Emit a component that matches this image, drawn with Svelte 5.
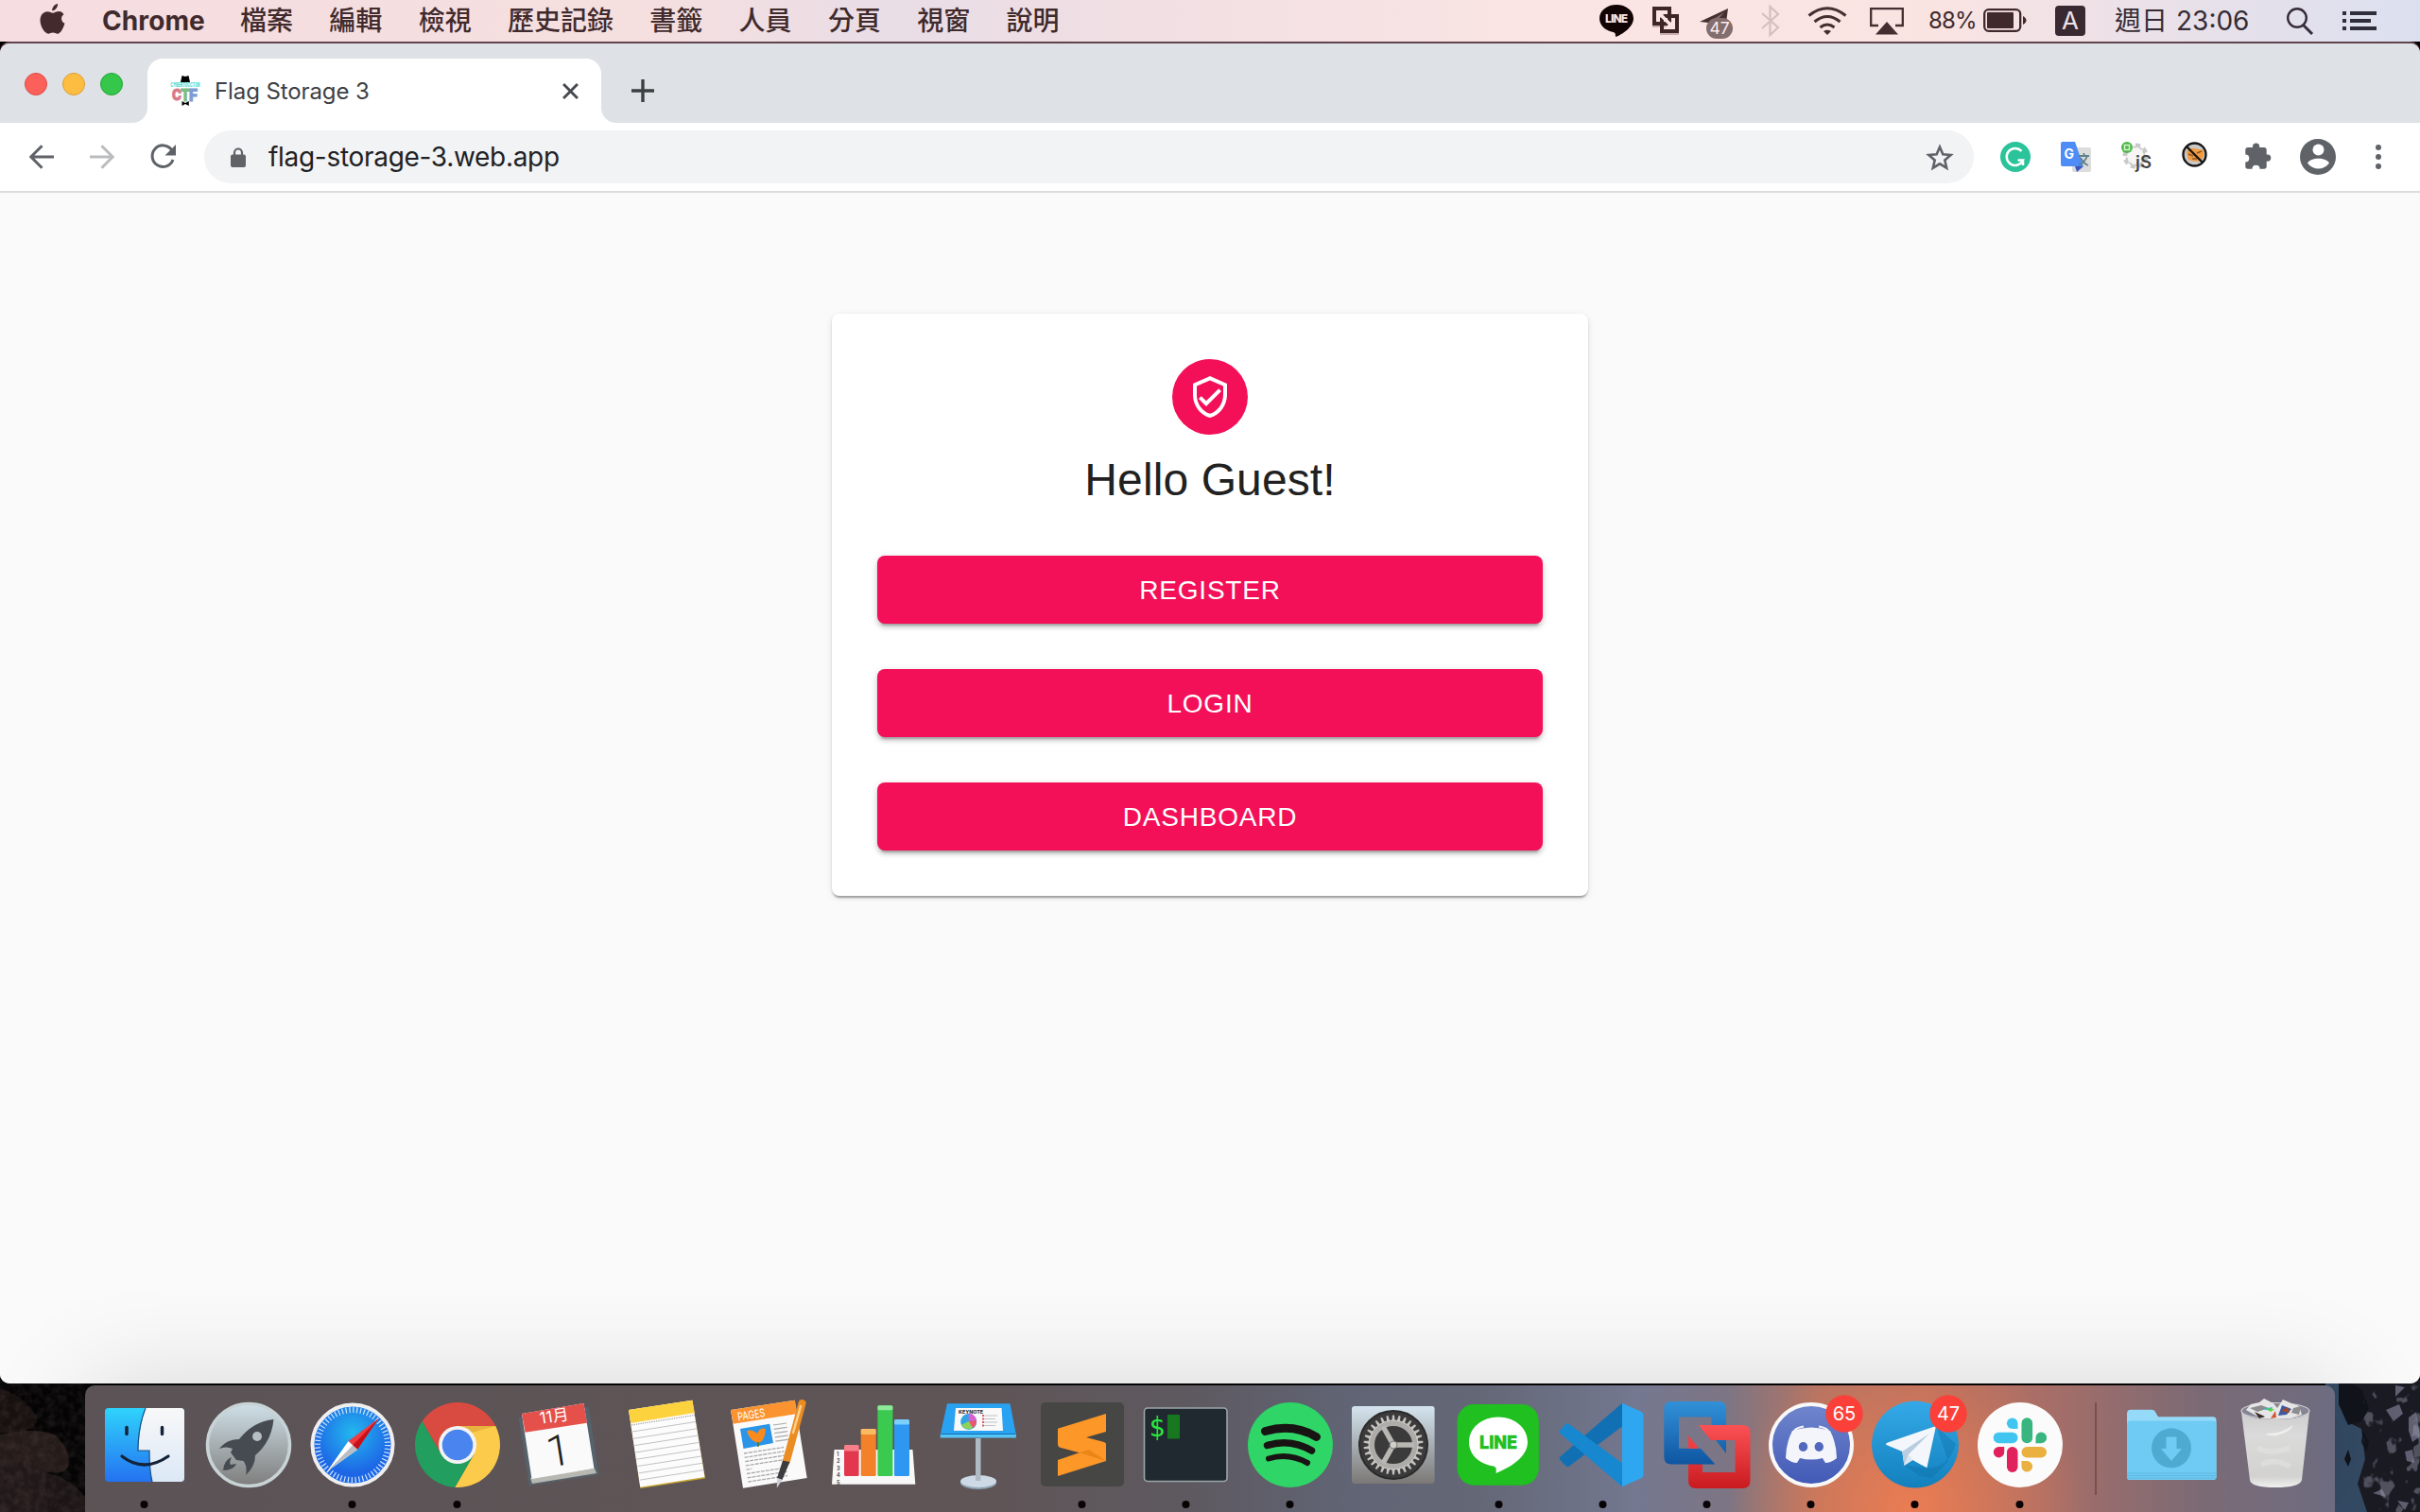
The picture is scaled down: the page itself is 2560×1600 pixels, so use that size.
<script>
  const menus = ['檔案', '編輯', '檢視', '歷史記錄', '書籤', '人員', '分頁', '視窗', '說明'];
  const actions = ['Register', 'Login', 'Dashboard'];
  const apps = [
    { name: 'finder', running: true },
    { name: 'launchpad' },
    { name: 'safari', running: true },
    { name: 'chrome', running: true },
    { name: 'calendar' },
    { name: 'notes' },
    { name: 'pages' },
    { name: 'numbers' },
    { name: 'keynote' },
    { name: 'sublime', running: true },
    { name: 'terminal', running: true },
    { name: 'spotify', running: true },
    { name: 'preferences' },
    { name: 'line', running: true },
    { name: 'vscode', running: true },
    { name: 'vmware', running: true },
    { name: 'discord', running: true, badge: '65' },
    { name: 'telegram', running: true, badge: '47' },
    { name: 'slack', running: true }
  ];
  const noteLines = [0, 1, 2, 3, 4, 5, 6, 7];
  const teeth = Array.from({ length: 30 }, (_, i) => i * 12);
</script>

<div class="desktop">
  <svg class="wallpaper" viewBox="0 0 2560 140" aria-hidden="true">
    <defs>
      <filter id="grain" x="0" y="0" width="100%" height="100%">
        <feTurbulence type="fractalNoise" baseFrequency="0.12" numOctaves="3" seed="4" />
        <feColorMatrix values="0 0 0 0 0.28  0 0 0 0 0.2  0 0 0 0 0.19  0 1.2 0 0 -0.42" />
      </filter>
      <filter id="snow" x="0" y="0" width="100%" height="100%">
        <feTurbulence type="fractalNoise" baseFrequency="0.06 0.05" numOctaves="3" seed="9" />
        <feColorMatrix values="0 0 0 0 0.38  0 0 0 0 0.39  0 0 0 0 0.48  12 0 0 0 -7" />
      </filter>
    </defs>
    <rect width="2560" height="140" fill="#060506" />
    <path d="M0 10Q22 14 40 40Q38 58 0 56Z" fill="#17110f" />
    <path d="M0 58Q35 50 58 58Q76 76 72 92Q64 104 40 94L0 88Z" fill="#261c1a" />
    <path d="M0 88Q30 84 50 98Q58 120 54 140H0Z" fill="#221a1a" />
    <path d="M48 98Q74 104 90 124V140H50Z" fill="#1d1616" />
    <rect width="90" height="140" filter="url(#grain)" opacity=".25" />
    <rect x="2460" width="100" height="140" fill="#1b1b24" />
    <path d="M2460 0H2476L2474 24 2482 44 2498 52 2502 84 2494 110 2504 140H2460Z" fill="#354b65" />
    <path d="M2474 4L2484 2 2498 10 2506 30 2498 44 2484 48 2474 26ZM2484 74L2487 84 2484 92 2480 84ZM2500 54L2506 66 2503 76 2498 66Z" fill="#11141b" />
    <path d="M2534 6L2544 8 2534 18ZM2524 32L2538 26 2542 36 2532 44ZM2548 40L2556 34 2560 60 2552 66 2548 54ZM2544 76L2552 74 2554 88 2546 86ZM2510 120L2520 116 2524 124ZM2536 128L2548 130 2544 138Z" fill="#5f6072" />
    <rect x="2500" width="60" height="140" filter="url(#snow)" opacity=".4" />
  </svg>

  <header class="menubar">
    <svg class="apple" viewBox="0 0 26 32"><path d="M18.6 0C18.8 3.600 15.800 7.300 12.700 7.300 12.300 4 15.400.4 18.600 0ZM25 11.300C21.500 13.400 21.700 19 26 20.800 24.500 25.500 21.800 31.700 18.400 31.700 16.600 31.700 15.700 30.600 13.500 30.600S10.300 31.700 8.600 31.700C5 31.700 0 24.400 0 17.600 0 11.700 3.600 8.200 7.700 8.200 10 8.200 12 9.700 13.500 9.700 14.800 9.700 17.200 8 20 8 22 8 23.900 9.200 25 11.300Z" fill="#432b2d" /></svg>
    <strong>Chrome</strong>
    <nav>
      {#each menus as menu}<span>{menu}</span>{/each}
    </nav>
    <div class="status">
      <svg class="s-line" viewBox="0 0 36 34"><path d="M18 0C8 0 0 6.300 0 14.500 0 21.500 6 27.300 13.500 28.700 16.500 29.300 17 30 17 34 20 33.500 36 25 36 14.500 36 6.300 28 0 18 0Z" fill="#120405" /><text x="18" y="19.200" text-anchor="middle" font-size="12" font-weight="800" fill="#fbe5e4" textLength="24">LINE</text></svg>
      <svg class="s-vm" viewBox="0 0 28 30"><path d="M0 18H20V22H0ZM8 26H28V30H8Z" fill="#c9b0ae" /><rect x="2" y="2" width="16" height="16" fill="none" stroke="#3f2523" stroke-width="4" /><rect x="10" y="10" width="16" height="16" fill="none" stroke="#3f2523" stroke-width="4" /><path d="M8 8L21 21" stroke="#fbe5e4" stroke-width="3.500" /><path d="M6 6H14L6 14ZM22 22H14L22 14Z" fill="#fbe5e4" /></svg>
      <div class="s-tg">
        <svg viewBox="0 0 32 26"><path d="M0 14L30 0 27 22 14 20 9 15Z" fill="#452f2f" /><path d="M10 14L26 4 14 18" fill="#806a6a" /></svg>
        <span>47</span>
      </div>
      <svg class="s-bt" viewBox="0 0 20 32"><path d="M1 8L18 23 9.500 31V1L18 9 1 24" fill="none" stroke="#d6bfbf" stroke-width="2.200" /></svg>
      <svg class="s-wifi" viewBox="0 0 42 30"><g fill="none" stroke="#452e30" stroke-width="3"><path d="M1.500 9.500Q21-6 40.500 9.500" /><path d="M7.500 16Q21 5 34.500 16" /><path d="M13.500 22Q21 16 28.500 22" /></g><path d="M17 26Q21 23.500 25 26L21 30Z" fill="#452e30" /></svg>
      <svg class="s-air" viewBox="0 0 36 29"><path d="M9 19H1.200V1.200H34.800V19H27" fill="none" stroke="#452e30" stroke-width="2.300" /><path d="M18 15L30 28.500H6Z" fill="#452e30" /></svg>
      <span class="percent">88%</span>
      <svg class="s-batt" viewBox="0 0 46 26"><rect x="1.200" y="1.200" width="38" height="22.600" rx="4.500" fill="none" stroke="#40292d" stroke-width="2.300" /><rect x="4" y="4" width="28" height="17" rx="1" fill="#40292d" /><path d="M42 8Q45.500 10 45.500 12.500T42 17Z" fill="#40292d" /></svg>
      <span class="ime">A</span>
      <span class="clock"><span>週日</span><span class="time">23:06</span></span>
      <svg class="s-find" viewBox="0 0 30 29"><circle cx="12" cy="11" r="9.800" fill="none" stroke="#352c38" stroke-width="2.400" /><path d="M18.500 18.500L28 28" stroke="#352c38" stroke-width="3" /></svg>
      <svg class="s-list" viewBox="0 0 36 20"><path d="M0 2H4M8 2H36M0 10H4M8 10H30M0 18H4M8 18H36" stroke="#2f2d3a" stroke-width="4" /></svg>
    </div>
  </header>

  <main class="window">
    <div class="tabstrip">
      <div class="lights"><i class="red"></i><i class="yellow"></i><i class="green"></i></div>
      <div class="tab">
        <svg class="favicon" viewBox="0 0 32 32"><path d="M11 7L12.500 0 16 1 19.500 0 21 7Z" fill="#000" /><text x="0.500" y="12.300" font-size="5.500" font-weight="800" fill="#3ad8cf" textLength="31" lengthAdjust="spacingAndGlyphs">CYBERTOCCTOR</text><text x="2" y="26" font-size="16" font-weight="800" fill="#d9788a" stroke="#d9788a" textLength="10" lengthAdjust="spacingAndGlyphs">C</text><text x="11" y="27" font-size="17" font-weight="800" fill="#7bbd83" stroke="#7bbd83" textLength="10" lengthAdjust="spacingAndGlyphs">T</text><text x="20" y="26.500" font-size="17" font-weight="800" fill="#7d9bd3" stroke="#7d9bd3" textLength="9" lengthAdjust="spacingAndGlyphs">F</text><path d="M12.500 27L16 29 19.800 27V32L16 30 12.500 32Z" fill="#000" /></svg>
        <span>Flag Storage 3</span>
        <svg class="close" viewBox="0 0 16 16"><path d="M1 1L15 15M15 1L1 15" stroke="#45494d" stroke-width="2.700" /></svg>
      </div>
      <svg class="plus" viewBox="0 0 24 24"><path d="M12 0V24M0 12H24" stroke="#3c4043" stroke-width="3.400" /></svg>
    </div>

    <div class="toolbar">
      <svg class="back" viewBox="0 0 26 26"><path d="M26 13H2.500M13.500 1.200L1.800 13 13.500 24.800" fill="none" stroke="#5f6368" stroke-width="3" /></svg>
      <svg class="forward" viewBox="0 0 26 26"><path d="M0 13H23.500M12.500 1.200L24.200 13 12.500 24.800" fill="none" stroke="#babcbe" stroke-width="3" /></svg>
      <svg class="reload" viewBox="0 0 28 26"><path d="M22.500 5.500A11.300 11.300 0 1 0 24 16" fill="none" stroke="#5f6368" stroke-width="3" /><path d="M27 0V11.500H15.500Z" fill="#5f6368" /></svg>
      <div class="omnibox">
        <svg class="lock" viewBox="0 0 16 21"><path d="M4 8V5.500A4 4 0 0 1 12 5.500V8" fill="none" stroke="#5f6368" stroke-width="2.200" /><rect y="7.500" width="16" height="13.500" rx="2" fill="#5f6368" /></svg>
        <span>flag-storage-3.web.app</span>
        <svg class="star" viewBox="0 0 30 29"><path d="M15 3.500L18.300 11.300 26.600 12 20.300 17.500 22.200 25.700 15 21.300 7.800 25.700 9.700 17.500 3.400 12 11.700 11.300Z" fill="none" stroke="#5f6368" stroke-width="2.600" /></svg>
      </div>
      <div class="extensions">
        <svg viewBox="0 0 32 32"><circle cx="16" cy="16" r="16" fill="#2bc39a" /><path d="M22.500 10A9 9 0 1 0 24 19.500H18.500M24 25V18.500" fill="none" stroke="#fff" stroke-width="2.500" /></svg>
        <svg viewBox="0 0 32 32"><rect x="12" y="6" width="20" height="26" rx="2" fill="#dcdcdc" /><path d="M0 2Q0 0 2 0H15L24 26H2Q0 26 0 24Z" fill="#4d8df5" /><path d="M15 26H24L17 32Z" fill="#3a55c0" /><text x="3.500" y="18" font-size="14" font-weight="700" fill="#fff">G</text><path d="M19 15H30M24.500 12V15M28 15Q26 21 19 25M21 17Q24 23 29 25" fill="none" stroke="#60808a" stroke-width="1.800" /></svg>
        <svg viewBox="0 0 32 32"><circle cx="15" cy="15" r="11.500" fill="#f4f4f4" stroke="#c9c9c9" stroke-width="4" stroke-dasharray="5 4" /><circle cx="15" cy="15" r="9.500" fill="#f6f6f6" stroke="#c4c4c4" stroke-width="1.500" stroke-dasharray="4 2" /><circle cx="6" cy="6" r="6" fill="#4eb848" /><rect x="3.500" y="3.500" width="5" height="5" fill="none" stroke="#d2f5cf" stroke-width="1.500" /><text x="15" y="28" font-size="18" font-weight="600" fill="#454545" textLength="17" lengthAdjust="spacingAndGlyphs">jS</text></svg>
        <svg viewBox="0 0 32 32"><circle cx="13.500" cy="13.500" r="12" fill="#c9c9c9" stroke="#151515" stroke-width="2.400" /><path d="M5 11Q7 6 13 7T23 9Q24 17 20 20 13 22 7 19Z" fill="#f39a3e" /><path d="M7 13L12 15M16 12L21 10M11 18H16" stroke="#8c5a2c" stroke-width="1.500" /><path d="M5 5L22 22" stroke="#151515" stroke-width="2.400" /></svg>
        <svg viewBox="0 0 32 32"><g transform="translate(1 .5)"><path d="M5 5.500H10V4.500A3.600 3.600 0 0 1 17.200 4.500V5.500H22Q24.700 5.500 24.700 8.200V13H25.700A3.600 3.600 0 0 1 25.700 20.200H24.700V25.500Q24.700 28.200 22 28.200H17.500A4 4 0 0 0 9.500 28.200H5Q2.300 28.200 2.300 25.500V21A4 4 0 0 0 2.300 13V8.200Q2.300 5.500 5 5.500Z" fill="#5f6368" /></g></svg>
      </div>
      <svg class="avatar" viewBox="0 0 38 38"><circle cx="19" cy="19" r="19" fill="#5f6368" /><circle cx="19.500" cy="11.500" r="6" fill="#fff" /><path d="M8 25.500C11 19 28 19 31 25.500 25 33.500 14 33.500 8 25.500Z" fill="#fff" /></svg>
      <svg class="dots" viewBox="0 0 6 28"><circle cx="3" cy="4" r="3" fill="#5f6368" /><circle cx="3" cy="14" r="3" fill="#5f6368" /><circle cx="3" cy="24" r="3" fill="#5f6368" /></svg>
    </div>

    <section class="page">
      <div class="card">
        <div class="shield">
          <svg viewBox="0 0 24 24"><path d="M12 1L3 5v6c0 5.550 3.840 10.740 9 12 5.160-1.260 9-6.450 9-12V5l-9-4zm7 10c0 4.520-2.980 8.690-7 9.930-4.020-1.240-7-5.410-7-9.930V6.300l7-3.110 7 3.110V11zm-11.590.59L6 13l4 4 8-8-1.410-1.420L10 14.170z" fill="#fff" /></svg>
        </div>
        <h1>Hello Guest!</h1>
        {#each actions as action}<button>{action}</button>{/each}
      </div>
    </section>
  </main>

  <footer class="dock">
    {#each apps as app}
      <div class="slot">
        <svg viewBox="0 0 110 134">
          {#if app.name === 'finder'}
            <defs>
              <linearGradient id="finderBlue" x2="0" y2="1"><stop stop-color="#2fd3fc" /><stop offset="1" stop-color="#2472f0" /></linearGradient>
              <linearGradient id="finderWhite" x2="0" y2="1"><stop stop-color="#f8f8f8" /><stop offset="1" stop-color="#dce8f6" /></linearGradient>
            </defs>
            <rect x="13" y="24" width="84" height="78" rx="4" fill="url(#finderBlue)" />
            <path d="M56 24H93Q97 24 97 28V98Q97 102 93 102H63Q60 90 60 69H48Q49 44 56 24Z" fill="url(#finderWhite)" />
            <path d="M56 24Q48 44 48 69H60Q60 90 63 102" fill="none" stroke="#174f80" stroke-width="1.200" />
            <path d="M36 44.500V51.500M73.500 44.500V51.500" stroke="#142339" stroke-width="3.500" stroke-linecap="round" />
            <path d="M31 75Q54 93 80 75" fill="none" stroke="#142339" stroke-width="3.200" stroke-linecap="round" />
          {:else if app.name === 'launchpad'}
            <defs><linearGradient id="silver" x2="0" y2="1"><stop stop-color="#cfe0e8" /><stop offset="1" stop-color="#7e7d7c" /></linearGradient></defs>
            <circle cx="55" cy="63" r="43.500" fill="url(#silver)" stroke="#c8d3d6" stroke-width="3.500" />
            <path d="M81.500 36Q60 38 45 57 32 57 24 67 31 64 38 67L36 71 42 79 49.500 80Q54 86 52 95 62 86 62 74 79 60 81.500 36Z" fill="#454b50" />
            <path d="M42 83Q39 90 28 90 29 79 37 76 34 82 36 84Z" fill="#454b50" />
            <circle cx="64" cy="54" r="5" fill="#b6bfc3" />
          {:else if app.name === 'safari'}
            <defs><radialGradient id="compass" cy=".35"><stop stop-color="#23b8ee" /><stop offset="1" stop-color="#1d66e6" /></radialGradient></defs>
            <circle cx="55" cy="63" r="42.500" fill="url(#compass)" stroke="#efefef" stroke-width="4" />
            <circle cx="55" cy="63" r="37" fill="none" stroke="#cfe8ff" stroke-width="6" stroke-dasharray="1.200 2.674" />
            <path d="M82.500 35L50.500 59 60 68Z" fill="#f03a40" /><path d="M82.500 35L55 63.500 60 68Z" fill="#c81018" />
            <path d="M28 91L50.500 59 60 68Z" fill="#fff" /><path d="M28 91L55 63.500 60 68Z" fill="#b9bec2" />
          {:else if app.name === 'chrome'}
            <path d="M17.500 38.100A45 45 0 0 1 95.300 43H55L37.700 73Z" fill="#d94b40" />
            <path d="M95.300 43A45 45 0 0 1 52.200 107.900L72.300 73 55 43Z" fill="#fdcb4b" />
            <path d="M52.200 107.900A45 45 0 0 1 17.500 38.100L37.700 73 72.300 73Z" fill="#229e5f" />
            <path d="M55 43H95.300L70 50Z" fill="#d9a235" opacity=".6" />
            <circle cx="55" cy="63" r="20" fill="#f3f3f3" /><circle cx="55" cy="63" r="16.300" fill="#4a84ef" />
          {:else if app.name === 'calendar'}
            <path d="M9.500 34L84 23 94.500 94.700 21 106Z" fill="#56626b" /><path d="M24 104L92 93 90 88 22 98Z" fill="#b8b8b2" />
            <path d="M13 30L78.500 19 89.500 88 23.500 99Z" fill="#fafafa" />
            <path d="M13 30L78.500 19 82 39.700 16.600 49.700Z" fill="#e5504b" />
            <text x="47" y="38.500" text-anchor="middle" font-size="17" fill="#fff" transform="rotate(-9 47 32)">11月</text>
            <text x="51.500" y="85" text-anchor="middle" font-size="46" font-weight="300" fill="#222" transform="rotate(-9 52 68)" class="thin">1</text>
          {:else if app.name === 'notes'}
            <path d="M16 26L83.300 15.700 97 98.500 28.600 109Z" fill="#c7a52e" /><path d="M16 26L83.300 15.700 96.500 97 28.200 107.700Z" fill="#fcfcfc" />
            <path d="M16 26L83.300 15.700 85.800 29 18.500 40Z" fill="#fcd23e" />
            <path d="M19 42L86 31.500" stroke="#9c9c9c" stroke-width="1.200" stroke-dasharray="1.200 1.200" />
            {#each noteLines as n}<path d="M20 49L87 38.500" stroke="#c2c2c2" stroke-width="1" transform="translate({n * 1.15} {n * 7.3})" />{/each}
          {:else if app.name === 'pages'}
            <path d="M14 26L81.700 15.700 94.700 98 27 108.700Z" fill="#fafafa" />
            <path d="M14 26L81.700 15.700 84.600 30 16.500 40.700Z" fill="#fb9430" />
            <text x="22" y="37.500" font-size="12" fill="#fff" transform="rotate(-9 22 37)" textLength="29" lengthAdjust="spacingAndGlyphs">PAGES</text>
            <path d="M24 46L55.200 40.700 59 61 27.500 67Z" fill="#2994e8" />
            <path d="M31 48Q37 46 42 51 45 44 51 46 50 60 43 61 34 59 31 48Z" fill="#fa8a1c" /><path d="M43 60V65" stroke="#49762c" stroke-width="1.500" />
            {#each noteLines as n}<path d="M28 72L{n === 4 ? 34 : 70} {n === 4 ? 71 : 65.500}" stroke="#aaa" stroke-width="1.300" stroke-dasharray="4 1" transform="translate({n * 0.6} {n * 4.3})" />{/each}
            {#each noteLines.slice(0, 5) as n}<path d="M59 42L73 40" stroke="#aaa" stroke-width="1.200" transform="translate({n * 0.6} {n * 4.3})" />{/each}
            <path d="M89.500 19L73 80" stroke="#ec8d22" stroke-width="8" stroke-linecap="round" /><path d="M88 22L80 50" stroke="#ffd090" stroke-width="2.500" stroke-linecap="round" />
            <path d="M76.500 81L69 79.500 63 98 68.500 100Z" fill="#3d3d3f" /><path d="M63 98L68.500 100 62.800 108.500Z" fill="#c9cfd4" />
          {:else if app.name === 'numbers'}
            <path d="M13.500 68H96.500L99.300 104.700H11Z" fill="#f8f8f8" />
            {#each [1, 2, 3, 4, 5] as n}<text x="16" y={67.5 + n * 7.4} font-size="5.500" font-weight="700" fill="#555">{n}</text>{/each}
            <rect x="24" y="63" width="15.600" height="33" rx="1.500" fill="#e2384d" /><rect x="24" y="63" width="15.600" height="6.500" rx="1.500" fill="#f5808a" />
            <rect x="41.700" y="46" width="16" height="50" rx="1.500" fill="#f2812a" /><rect x="41.700" y="46" width="16" height="6" rx="1.500" fill="#f9bb62" />
            <rect x="59.400" y="21.300" width="16" height="74.700" rx="1.500" fill="#3bca50" /><rect x="59.400" y="21.300" width="16" height="5" rx="1.500" fill="#8ee898" />
            <rect x="77" y="36" width="16" height="60" rx="1.500" fill="#2e97f2" /><rect x="77" y="36" width="16" height="5.500" rx="1.500" fill="#7dcffb" />
          {:else if app.name === 'keynote'}
            <ellipse cx="55" cy="103" rx="19" ry="7" fill="#8fa3b2" /><ellipse cx="55" cy="101.500" rx="19" ry="6.500" fill="#cddae6" />
            <rect x="52" y="56" width="5.500" height="45" fill="#aebac4" />
            <path d="M22 19.300H88.500L94.800 52V55H14.800V52Z" fill="#2aa2f2" /><path d="M14.800 52H94.800V55.500H14.800Z" fill="#56c4f4" /><path d="M15.500 51.500H94" stroke="#0f6fb6" stroke-width="1" />
            <path d="M31 24H79.600L81 48H29Z" fill="#f9f9f9" />
            <text x="34" y="29.500" font-size="5" font-weight="800" fill="#333" textLength="26" lengthAdjust="spacingAndGlyphs">KEYNOTE</text>
            <circle cx="44.700" cy="38.500" r="8.500" fill="#2fa5e6" /><path d="M44.700 38V29.500A8.500 8.500 0 0 1 53 37Z" fill="#d85fd2" /><path d="M44.700 38L53 37A8.500 8.500 0 0 1 49 45Z" fill="#f0546a" /><path d="M44.700 38L49 45A8.500 8.500 0 0 1 37 42Z" fill="#8ed357" />
            <path d="M60 32H75M60 35.500H73M60 39H75M60 42.500H73" stroke="#c2c2c2" /><path d="M59 32H61M59 35.500H61M59 39H61M59 42.500H61" stroke="#e6576c" stroke-width="2" />
          {:else if app.name === 'sublime'}
            <rect x="11" y="18" width="88" height="89" rx="5" fill="#464645" />
            <path d="M80 62V80L51.700 71.300 30.500 65.500Q29 64.500 29 62V45.700L80 30V49L59 55 78 60Q80 61 80 62Z" fill="#fd9727" /><path d="M80 62V80L29 96V79L51.700 71.300Z" fill="#fd9727" /><path d="M51.700 71.300L62 68 80 80Z" fill="#ea8618" />
          {:else if app.name === 'terminal'}
            <rect x="10.500" y="24" width="87.500" height="77.500" rx="3.500" fill="#20292f" stroke="#9aa6ab" stroke-width="1.600" />
            <text x="15.500" y="54" font-size="28" fill="#29e83c" class="mono">$</text><rect x="35" y="31" width="13" height="25.500" fill="#17781f" />
          {:else if app.name === 'spotify'}
            <circle cx="55" cy="63" r="45" fill="#2fd566" />
            <g fill="none" stroke="#191414" stroke-linecap="round"><path d="M28.500 48.500Q58 40 82.500 54.500" stroke-width="9" /><path d="M30.500 63.500Q55 56 77.500 69" stroke-width="7.500" /><path d="M32 77.500Q53 71 73 82" stroke-width="6" /></g>
          {:else if app.name === 'preferences'}
            <defs><linearGradient id="steel" x2="0" y2="1"><stop stop-color="#d4e4ee" /><stop offset="1" stop-color="#7b7876" /></linearGradient></defs>
            <rect x="10" y="22" width="87.600" height="82" rx="3" fill="url(#steel)" />
            <circle cx="54" cy="63" r="36" fill="#3c3b3b" stroke="#2b2b2b" stroke-width="2" />
            {#each teeth as a}<path d="M52.300 38L53 31.500H55L55.700 38Z" fill="#c3c2be" transform="rotate({a} 54 63)" />{/each}
            <circle cx="54" cy="63" r="23" fill="none" stroke="#aeaca8" stroke-width="6" /><circle cx="54" cy="63" r="26" fill="none" stroke="#d3d1cd" />
            <path d="M54 63H76M54 63L43 43.500M54 63L43 82.500" stroke="#b9b7b2" stroke-width="5.500" /><circle cx="54" cy="63" r="4" fill="#d1cfca" stroke="#777" />
          {:else if app.name === 'line'}
            <rect x="10.500" y="20" width="86.300" height="85.700" rx="18" fill="#1fc01f" />
            <path d="M54 33.500C36.500 33.500 23 45 23 60 23 73 33 83 49 85.500 52 86.500 52 88.500 51.500 93 66 87 85 76 85 60 85 45 71.500 33.500 54 33.500Z" fill="#fff" />
            <text x="54" y="66.500" text-anchor="middle" font-size="19" font-weight="800" fill="#1fc01f" stroke="#1fc01f" stroke-width=".6" textLength="40" lengthAdjust="spacingAndGlyphs">LINE</text>
          {:else if app.name === 'vscode'}
            <path d="M75 18.700V43.500L19 85.500Q17 87 15 85L9.500 79Q8 77 9.500 75.500Z" fill="#1070b3" />
            <path d="M75 107.300V82.300L19 41Q17 39.500 15 41L9.500 47Q8 49 9.500 51Z" fill="#1787d0" />
            <path d="M75 18.700L95.500 28Q97.500 29.500 97.500 31.500V95Q97.500 97 95.500 98L75 107.300Z" fill="#2fa6f0" />
          {:else if app.name === 'vmware'}
            <defs>
              <linearGradient id="vmBlue" gradientUnits="userSpaceOnUse" x1="0" y1="17" x2="0" y2="84"><stop stop-color="#3191d8" /><stop offset="1" stop-color="#0f55a0" /></linearGradient>
              <linearGradient id="vmRed" gradientUnits="userSpaceOnUse" x1="0" y1="42" x2="0" y2="109"><stop stop-color="#fb5256" /><stop offset="1" stop-color="#c91b1f" /></linearGradient>
            </defs>
            <path d="M46 42H92Q100.500 42 100.500 50V101Q100.500 109 92 109H43Q35 109 35 101V53L50 73V92H84.600V58H59Z" fill="url(#vmRed)" />
            <path d="M17 17H67Q75 17 75 25V72L59.400 52V33.500H25V66.700H48L63.500 83.500H17Q9.300 83.500 9.300 75.500V25Q9.300 17 17 17Z" fill="url(#vmBlue)" />
            <path d="M46 42H76V58H59Z" fill="url(#vmRed)" /><path d="M35 53L46 66.700H35Z" fill="#ee4044" />
          {:else if app.name === 'discord'}
            <defs><linearGradient id="blurple" x2="0" y2="1"><stop stop-color="#7086cd" /><stop offset="1" stop-color="#4259b6" /></linearGradient></defs>
            <circle cx="55" cy="63" r="43" fill="url(#blurple)" stroke="#f8f8f8" stroke-width="4" />
            <path d="M35 48Q55 41 75 48 82 62 82 77 76 82 70 82L67 77Q55 80 43 77L40 82Q34 82 28 77 28 62 35 48Z" fill="#f4f5fb" />
            <path d="M37 48Q40 44.500 47 43.500M73 48Q70 44.500 63 43.500" fill="none" stroke="#f4f5fb" stroke-width="2" />
            <ellipse cx="46.500" cy="65" rx="4.700" ry="5" fill="#5268bd" /><ellipse cx="63.300" cy="65" rx="4.700" ry="5" fill="#5268bd" />
          {:else if app.name === 'telegram'}
            <defs><linearGradient id="sky" x2="0" y2="1"><stop stop-color="#35a9e8" /><stop offset="1" stop-color="#1280bd" /></linearGradient></defs>
            <circle cx="55" cy="62.500" r="46" fill="url(#sky)" />
            <path d="M77 43L98 62Q90 88 67.400 87.300L43.400 84.700 60 96 73 98 90 80Z" fill="#0f74ac" opacity=".45" />
            <path d="M24.500 63Q23 61.500 26 60.500L77 43 67.400 87.300 52.300 79 43.400 84.700 41.300 70Z" fill="#f3f7fb" /><path d="M41.300 70L70 51 48 73 43.400 84.700Z" fill="#b9cde0" /><path d="M43.400 84.700L48 73 52.300 79Z" fill="#dbe6f0" />
          {:else if app.name === 'slack'}
            <circle cx="55" cy="63" r="45" fill="#fbfbfb" />
            <path d="M52.500 46H46.700A5.800 5.800 0 1 1 52.500 40Z" fill="#40c5f0" /><rect x="26.700" y="49.700" width="25.800" height="11.500" rx="5.700" fill="#40c5f0" />
            <rect x="56.500" y="34.300" width="11.600" height="26.900" rx="5.700" fill="#39b580" /><path d="M71.500 61.200V55.500A5.800 5.800 0 1 1 77.300 61.200Z" fill="#39b580" />
            <path d="M38.200 65V70.500A5.700 5.700 0 1 1 32.500 65Z" fill="#e0215c" /><rect x="41" y="65" width="11.500" height="27" rx="5.700" fill="#e0215c" />
            <rect x="56.500" y="65" width="26.500" height="11.400" rx="5.700" fill="#eab040" /><path d="M56.500 80H62.300A5.800 5.800 0 1 1 56.500 86Z" fill="#eab040" />
          {/if}
          {#if app.running}<circle cx="54.500" cy="126" r="4" class="running" />{/if}
          {#if app.badge}
            <circle cx="90" cy="30" r="19.700" fill="#fa4039" /><text x="90" y="37.200" text-anchor="middle" font-size="20" fill="#fff">{app.badge}</text>
          {/if}
        </svg>
      </div>
    {/each}
    <i class="divider"></i>
    <div class="slot">
      <svg viewBox="0 0 110 134">
        <path d="M8 30Q8 25.700 12 25.700H34Q37 25.700 38.500 29L41 33.300H99Q102.500 33.300 102.500 37V97Q102.500 100 99 100H11Q8 100 8 97Z" fill="#95dbf9" />
        <path d="M8 41Q8 37.500 12 37.500H99Q102.500 37.500 102.500 41V97Q102.500 100 99 100H11Q8 100 8 97Z" fill="#70cbf4" />
        <path d="M8 93H102.500M8 95.500H102.500M8 98H102.500" stroke="#56b3dc" stroke-width=".8" />
        <circle cx="55" cy="66.300" r="21" fill="#4faad2" /><path d="M49.500 54.500H60.500V67H66L55 80 44 67H49.500Z" fill="#70cbf4" />
      </svg>
    </div>
    <div class="slot">
      <svg viewBox="0 0 110 134">
        <defs><linearGradient id="bin" x2="0" y2="1"><stop stop-color="#cfcfd1" /><stop offset=".3" stop-color="#dededd" /><stop offset=".85" stop-color="#d5d5d3" /><stop offset="1" stop-color="#f4f4f4" /></linearGradient></defs>
        <ellipse cx="55" cy="27" rx="36" ry="8.500" fill="#858593" stroke="#d4d4da" stroke-width="1.200" />
        <path d="M24 26L29 20 38 18 43 14 53 19 57 24 63 15 72 19 80 22 83 31 70 35H40Z" fill="#e6e6e6" />
        <path d="M28 24L40 21 48 24 36 28ZM36 30L44 34H36ZM74 24L82 22 80 31 72 29Z" fill="#8d8d8f" />
        <path d="M33 28L44 33 38 35Z" fill="#3a2c2c" /><path d="M42 25L52 23 50 27Z" fill="#21b5e8" /><path d="M45 24L54 25 50 28Z" fill="#5dd43b" /><path d="M55 27L56 34 50 35Z" fill="#d35435" />
        <path d="M62 21L72 25 67 31 58 32Z" fill="#3d5b9e" /><path d="M61 27L68 23 70 29Z" fill="#a64827" />
        <path d="M19 28Q25 36 55 36T91 28L83 100Q81 108 55 108T28 100Z" fill="url(#bin)" opacity=".97" />
        <path d="M44 51Q60 52 74 42 70 50 56 53 48 54 44 51Z" fill="#efefee" />
        <path d="M36 66Q50 74 70 66M40 84Q55 76 70 86" fill="none" stroke="#e6e6e4" stroke-width="6" opacity=".5" />
      </svg>
    </div>
  </footer>
</div>

<style>
  :global(body) { margin: 0; overflow: hidden; }
  .desktop { position: relative; display: flex; flex-direction: column; width: 2560px; height: 1600px; overflow: hidden; background: #000; font-family: Inter, 'Noto Sans CJK TC', sans-serif; }
  svg { display: block; flex: none; overflow: visible; }
  text { font-family: Inter, 'Noto Sans CJK TC', sans-serif; }
  .thin { font-family: Roboto, sans-serif; }
  .mono { font-family: 'DejaVu Sans Mono', monospace; }
  .wallpaper { position: absolute; left: 0; bottom: 0; width: 2560px; height: 140px; }

  .menubar { position: relative; box-sizing: border-box; flex: none; display: flex; align-items: center; height: 44px; padding-left: 42px; color: #402a2c; font-size: 28px; background: linear-gradient(90deg, #f5dde1, #f6dfdf 26%, #e9dde6 37%, #f1dfe3 47%, #fbe5e4 65%, #fae4e2 80%, #ece1e8 88%, #dbe0ef); }
  .apple { width: 27px; height: 32px; margin-top: -4px; }
  .menubar strong { width: 146px; margin-left: 39px; font-size: 28px; font-weight: 700; line-height: 44px; letter-spacing: 0.1px; white-space: nowrap; }
  nav { display: flex; gap: 38.3px; width: 1438px; margin-top: 0; font-weight: 500; line-height: 44px; white-space: nowrap; }
  .status { display: flex; align-items: center; height: 44px; }
  .s-line { width: 36px; height: 34px; }
  .s-vm { width: 28px; height: 30px; margin-left: 20px; }
  .s-tg { position: relative; width: 36px; height: 34px; margin-left: 22px; }
  .s-tg svg { width: 32px; height: 26px; margin-top: 4px; }
  .s-tg span { position: absolute; left: 7px; top: 14px; width: 28px; height: 22px; border-radius: 11px; background: #836d6d; color: #fbecec; font-size: 17.500px; line-height: 22px; text-align: center; }
  .s-bt { width: 20px; height: 32px; margin-left: 29px; }
  .s-wifi { width: 42px; height: 30px; margin-left: 29px; }
  .s-air { width: 36px; height: 29px; margin-left: 24px; }
  .percent { width: 58px; margin: -2px 0 0 26px; font-size: 24px; letter-spacing: -0.9px; }
  .s-batt { width: 46px; height: 26px; }
  .ime { width: 32px; height: 32px; margin-left: 30px; border-radius: 4px; background: #392a31; color: #eee1e8; font-size: 26px; line-height: 32px; text-align: center; }
  .clock { display: flex; align-items: baseline; width: 181px; height: 44px; margin: 0 0 0 31px; color: #352c35; line-height: 44px; }
  .time { margin-left: 9px; }
  .s-find { width: 30px; height: 29px; }
  .s-list { width: 36px; height: 20px; margin-left: 30px; }

  .window { position: relative; display: flex; flex: none; flex-direction: column; height: 1418px; margin-top: 2px; border-radius: 10px; overflow: hidden; background: #fafafa; box-shadow: 0 -2px 0 #60434d; }
  .tabstrip { display: flex; flex: none; height: 84px; background: #dee1e6; }
  .lights { display: flex; gap: 16px; width: 130px; padding: 31px 0 0 26px; }
  .lights i { box-sizing: border-box; width: 24px; height: 24px; border-radius: 50%; }
  .red { background: #fc605b; border: 1px solid #dd4a45; }
  .yellow { background: #fdbd40; border: 1px solid #dc9e32; }
  .green { background: #34c749; border: 1px solid #25a537; }
  .tab { position: relative; display: flex; align-items: center; box-sizing: border-box; width: 480px; height: 68px; margin-top: 16px; padding: 0 24px; border-radius: 16px 16px 0 0; background: #fff; color: #3c4043; font: 24px Inter, sans-serif; }
  .tab::before, .tab::after { content: ''; position: absolute; bottom: 0; width: 16px; height: 16px; }
  .tab::before { left: -16px; background: radial-gradient(circle at 0 0, transparent 15.500px, #fff 16.500px); }
  .tab::after { right: -16px; background: radial-gradient(circle at 100% 0, transparent 15.500px, #fff 16.500px); }
  .favicon { width: 32px; height: 32px; }
  .tab span { flex: 1; margin-left: 15px; letter-spacing: -0.1px; }
  .close { width: 17px; height: 17px; }
  .plus { width: 24px; height: 24px; margin: 38px 0 0 32px; }

  .toolbar { display: flex; flex: none; align-items: center; box-sizing: border-box; height: 74px; border-bottom: 2px solid #dadce0; background: #fff; }
  .back { width: 26px; height: 26px; margin-left: 31px; }
  .forward { width: 26px; height: 26px; margin-left: 38px; }
  .reload { width: 28px; height: 26px; margin-left: 38px; }
  .omnibox { display: flex; align-items: center; box-sizing: border-box; width: 1872px; height: 56px; margin-left: 29px; padding: 0 21px 0 28px; border-radius: 28px; background: #f1f3f4; color: #202124; font: 28px Inter, sans-serif; }
  .lock { width: 16px; height: 21px; }
  .omnibox span { flex: 1; margin-left: 24px; letter-spacing: -0.3px; }
  .star { width: 30px; height: 29px; }
  .extensions { display: flex; gap: 32px; margin-left: 28px; }
  .extensions svg { width: 32px; height: 32px; }
  .avatar { width: 38px; height: 38px; margin-left: 29px; }
  .dots { width: 6px; height: 28px; margin-left: 42px; }

  .page { display: flex; flex: 1; justify-content: center; align-items: flex-start; background: #fafafa; }
  .card { display: flex; flex-direction: column; align-items: center; box-sizing: border-box; width: 800px; height: 616px; margin-top: 128px; padding: 48px; border-radius: 8px; background: #fff; box-shadow: 0 4px 2px -2px rgba(0, 0, 0, .2), 0 2px 2px rgba(0, 0, 0, .14), 0 2px 6px rgba(0, 0, 0, .12); font-family: 'Liberation Sans', sans-serif; }
  .shield { display: grid; flex: none; place-items: center; width: 80px; height: 80px; border-radius: 50%; background: #f31059; }
  .shield svg { width: 48px; height: 48px; }
  h1 { flex: none; margin: 16px 0; color: #212121; font-size: 48px; font-weight: 400; line-height: 64px; letter-spacing: 0.1px; }
  button { flex: none; box-sizing: border-box; width: 704px; height: 72px; margin: 32px 0 16px; padding: 1px 0 0; border: 0; border-radius: 8px; background: #f31059; color: #fff; font: 28px/71px 'Liberation Sans', sans-serif; letter-spacing: 0.8px; text-transform: uppercase; box-shadow: 0 6px 2px -4px rgba(0, 0, 0, .2), 0 4px 4px rgba(0, 0, 0, .14), 0 2px 10px rgba(0, 0, 0, .12); }

  .dock { position: relative; display: flex; flex: none; box-sizing: border-box; width: 2380px; height: 134px; margin: 2px 0 0 90px; padding-left: 8px; border-radius: 10px 10px 0 0; background: radial-gradient(ellipse 190px 170px at 1930px 130px, rgba(242, 126, 80, .85), transparent), linear-gradient(90deg, #5b5356, #5f5557 40%, #5e5960 49%, #606474 56%, #636776 62%, #747890 69%, #7d7584 73%, #b37463 77%, #b97160 82%, #a86e67 87%, #7b6a75 94%, #6d6c80); box-shadow: 0 0 110px rgba(0, 0, 0, .15); }
  .slot { flex: none; width: 110.210px; }
  .slot svg { width: 110px; height: 134px; }
  .running { fill: #080204; }
  .divider { flex: none; width: 2px; height: 98px; margin: 18px 24px 0 24.200px; background: #784f4d; }
</style>
